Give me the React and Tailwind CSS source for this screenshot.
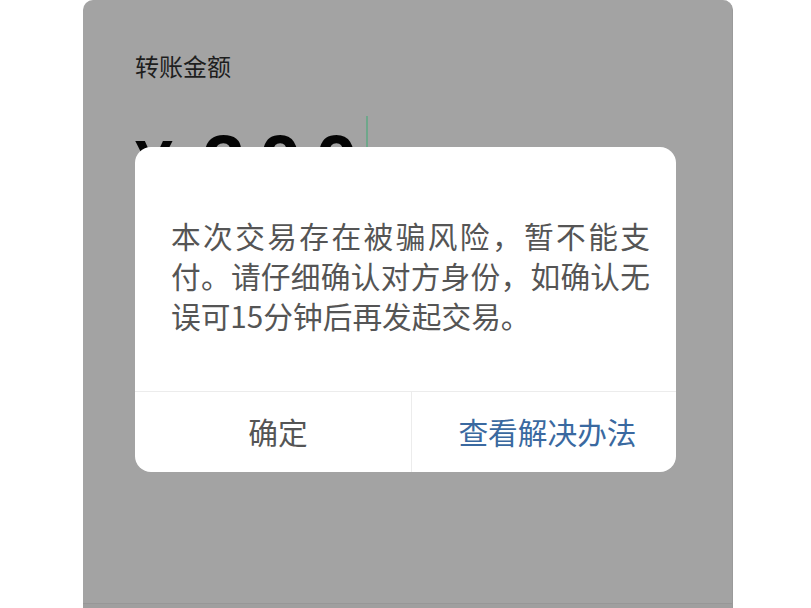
export default function App() {
  const cjk = { fontFamily: '"Noto Sans CJK SC", "Noto Sans", sans-serif' };
  return (
    <div className="w-[811px] h-[608px] bg-white flex overflow-hidden" style={cjk}>
      <div className="ml-[83px] relative w-[650px] h-[608px] bg-[#a3a3a3] rounded-t-[10px] border-r border-[#9a9a9a] flex flex-col">
        <div className="flex-1 pt-[48px] pl-[52px]">
          <div className="text-[24px] leading-[36px] text-[#1e1e1e]">转账金额</div>
          <div className="mt-[40px] flex items-baseline text-[#050505]" style={{ fontFamily: '"Liberation Sans", Arial, sans-serif' }}>
            <span className="text-[68px] leading-none font-bold">¥</span>
            <span className="ml-[30px] text-[76px] leading-none font-bold tracking-[14px] mr-[-14px]">300</span>
            <span className="self-start ml-[8px] mt-[-8px] w-[2px] h-[80px] bg-[#6fa78b]"></span>
          </div>
        </div>
        <div className="h-[5px] border-t border-[#979797] bg-[#9f9f9f]"></div>

        <div className="absolute left-[52px] top-[147px] w-[541px] bg-white rounded-[16px] overflow-hidden">
          <div className="pt-[69px] pb-[55px] pl-[36px] pr-[26px] text-[29.7px] leading-[40px] text-[#555555] text-justify">
            本次交易存在被骗风险，暂不能支付。请仔细确认对方身份，如确认无误可15分钟后再发起交易。
          </div>
          <div className="flex h-[81px] border-t border-[#ececec]">
            <div className="w-[276px] pl-[10px] flex items-center justify-center text-[29.7px] text-[#555555]">确定</div>
            <div className="flex-1 pl-[7px] border-l border-[#ececec] flex items-center justify-center text-[29.7px] text-[#3a69a0]">查看解决办法</div>
          </div>
        </div>
      </div>
    </div>
  );
}
